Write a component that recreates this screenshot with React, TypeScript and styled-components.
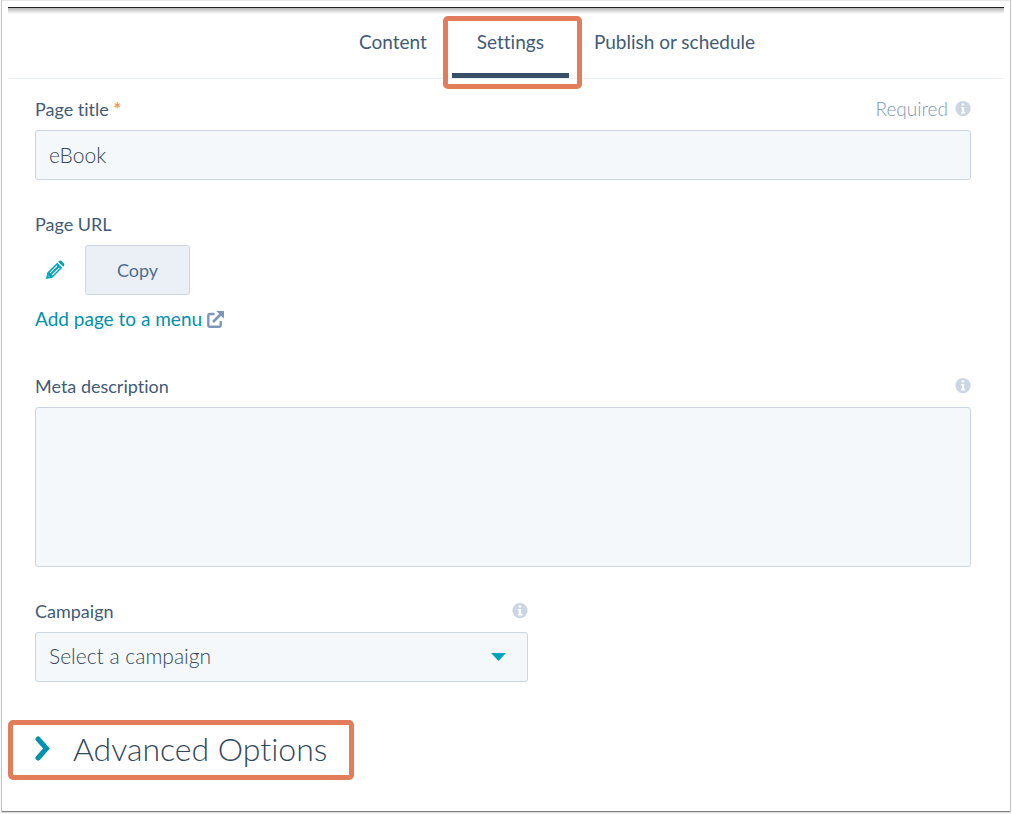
import React from "react";
import styled, { createGlobalStyle } from "styled-components";

const colors = {
  ink: "#33475b",
  tab: "#425b76",
  muted: "#7c98b6",
  line: "#cbd6e2",
  field: "#f5f8fa",
  teal: "#0091ae",
  brightTeal: "#00a4bd",
  callout: "#e27c5a",
};

const GlobalStyle = createGlobalStyle`
  *, *::before, *::after { box-sizing: border-box; }
  body {
    margin: 0;
    background: #fff;
    color: ${colors.ink};
    font-family: Lato, "Open Sans", sans-serif;
    font-size: 18px;
    font-variant-ligatures: none;
    line-height: 24px;
  }
  button, input, select, textarea {
    font: inherit;
    font-variant-ligatures: none;
    color: inherit;
  }
`;

const Frame = styled.div`
  margin: 1px 2px 3px;
  padding: 6px 6px 31px;
  background: #fff;
  box-shadow: 0 1px 0 0 #808080, 0 -1px 0 0 #e8e8e8, 0 0 0 1px #c4c4c4, 0 1px 1px 1px #dcdcdc;
`;

const Header = styled.header`
  height: 72px;
  border-top: 1px solid #222;
  border-bottom: 1px solid #eaf0f6;
  background: linear-gradient(#b4b4b4, #fff 6px);
`;

const Tabs = styled.nav`
  display: flex;
  justify-content: center;
  height: 100%;
  padding-left: 102px;
`;

const Tab = styled.a<{ $active?: boolean }>`
  position: relative;
  padding: 22px 25px 0;
  color: ${colors.tab};
  font-size: 19px;
  text-decoration: none;
  white-space: nowrap;
  border-bottom: 5px solid ${(p) => (p.$active ? "#384f67" : "transparent")};
`;

const TabCallout = styled.span`
  position: absolute;
  inset: 8px -13px -16px -9px;
  border: 5px solid ${colors.callout};
  border-radius: 5px;
  pointer-events: none;
`;

const Form = styled.form`
  padding: 19px 33px 0 27px;
`;

const Field = styled.div<{ $narrow?: boolean; $gap?: number }>`
  width: ${(p) => (p.$narrow ? "52.7%" : "100%")};
  margin-bottom: ${(p) => p.$gap ?? 33}px;
`;

const LabelRow = styled.div`
  display: flex;
  justify-content: space-between;
  align-items: center;
  height: 24px;
  margin-bottom: 8px;
  padding-bottom: 2px;
  color: ${colors.tab};
`;

const Star = styled.span`
  color: #ff8f59;
  font-weight: 700;
`;

const Hint = styled.span`
  display: flex;
  align-items: center;
  gap: 7px;
  color: ${colors.muted};
  font-size: 19px;
  font-weight: 300;
`;

const boxed = `
  display: block;
  width: 100%;
  border: 1px solid ${colors.line};
  border-radius: 3px;
  background: ${colors.field};
  outline: none;
  font-size: 21px;
  font-weight: 300;
`;

const TextInput = styled.input`
  ${boxed}
  height: 50px;
  padding: 0 13px 2px;
`;

const TextArea = styled.textarea`
  ${boxed}
  height: 160px;
  padding: 12px 13px;
  resize: none;
`;

const SelectWrap = styled.div`
  position: relative;
  svg {
    position: absolute;
    right: 22px;
    top: 21px;
    pointer-events: none;
  }
`;

const Select = styled.select`
  ${boxed}
  height: 50px;
  padding: 0 48px 2px 13px;
  appearance: none;
`;

const UrlRow = styled.div`
  display: flex;
  align-items: center;
  gap: 10px;
  margin-bottom: 13px;
`;

const IconButton = styled.button`
  display: flex;
  align-items: center;
  justify-content: center;
  width: 40px;
  height: 50px;
  padding: 0;
  border: 0;
  background: none;
`;

const CopyButton = styled.button`
  width: 105px;
  height: 50px;
  padding: 0;
  border: 1px solid ${colors.line};
  border-radius: 3px;
  background: #eaf0f6;
  color: #506e91;
`;

const MenuLink = styled.a`
  display: inline-flex;
  align-items: center;
  gap: 5px;
  height: 24px;
  padding-bottom: 2px;
  color: ${colors.teal};
  font-size: 19px;
  text-decoration: none;
  vertical-align: top;
`;

const AdvancedButton = styled.button`
  display: flex;
  align-items: center;
  gap: 23px;
  height: 60px;
  margin-top: 38px;
  padding: 0 22px 2px;
  border: 5px solid ${colors.callout};
  border-radius: 5px;
  background: #fff;
  font-size: 32px;
  font-weight: 300;
  line-height: 40px;
  white-space: nowrap;
`;

const InfoIcon = () => (
  <svg width="16" height="16" viewBox="0 0 16 16" aria-hidden="true">
    <circle cx="8" cy="7.6" r="7.6" fill="#cbd6e2" />
    <path d="M6.6 2.6h2.6v2H6.6zM6 6h3.2v4.8h1v1.6H6v-1.6h1V7.6H6z" fill="#fff" />
  </svg>
);

const PencilIcon = () => (
  <svg width="20" height="20" viewBox="0 0 20 20" aria-hidden="true">
    <path
      d="M1 19 2.3 12.6 12.2 2.7 17.3 7.8 7.4 17.7ZM13.2 1.7 14.1.9Q15.3.1 16.6 1L18.8 3.2Q19.8 4.6 18.9 5.9L18.2 6.7Z"
      fill={colors.brightTeal}
    />
    <path d="M5 12.8 12.2 5.6M7.2 15 14.4 7.8" fill="none" stroke="#fff" strokeWidth="1.1" />
    <path d="M2.7 15.2 4.8 17.3" stroke="#fff" strokeWidth=".5" />
  </svg>
);

const ExternalIcon = () => (
  <svg width="17" height="17" viewBox="0 0 17 17" fill="none" stroke={colors.muted} aria-hidden="true">
    <path d="M7.5 3H3Q1.3 3 1.3 4.7V14Q1.3 15.7 3 15.7H12Q13.7 15.7 13.7 14V10" strokeWidth="2.4" />
    <path d="M6 11 14 3" strokeWidth="2.6" />
    <path d="M9.3 0H17V7.7Z" fill={colors.muted} stroke="none" />
  </svg>
);

const CaretIcon = () => (
  <svg width="15" height="8" viewBox="0 0 15 8" aria-hidden="true">
    <path d="M0 0H15L7.5 8Z" fill={colors.brightTeal} />
  </svg>
);

const ChevronIcon = () => (
  <svg width="15" height="26" viewBox="0 0 15 26" fill="none" aria-hidden="true">
    <path
      d="M3 3 11.5 12.5 3 22"
      stroke={colors.teal}
      strokeWidth="5"
      strokeLinecap="round"
    />
  </svg>
);

export default function App() {
  return (
    <>
      <GlobalStyle />
      <Frame>
        <Header>
          <Tabs aria-label="Page editor">
            <Tab href="#content">Content</Tab>
            <Tab href="#settings" $active aria-current="page">
              Settings
              <TabCallout />
            </Tab>
            <Tab href="#publish">Publish or schedule</Tab>
          </Tabs>
        </Header>
        <main>
          <Form onSubmit={(e) => e.preventDefault()}>
            <Field>
              <LabelRow>
                <label htmlFor="title">
                  Page title <Star>*</Star>
                </label>
                <Hint>
                  Required <InfoIcon />
                </Hint>
              </LabelRow>
              <TextInput id="title" type="text" defaultValue="eBook" required />
            </Field>
            <Field $gap={43}>
              <LabelRow>Page URL</LabelRow>
              <UrlRow>
                <IconButton type="button" aria-label="Edit page URL">
                  <PencilIcon />
                </IconButton>
                <CopyButton type="button">Copy</CopyButton>
              </UrlRow>
              <MenuLink href="#menu">
                Add page to a menu <ExternalIcon />
              </MenuLink>
            </Field>
            <Field>
              <LabelRow>
                <label htmlFor="meta">Meta description</label>
                <Hint>
                  <InfoIcon />
                </Hint>
              </LabelRow>
              <TextArea id="meta" />
            </Field>
            <Field $narrow $gap={0}>
              <LabelRow>
                <label htmlFor="campaign">Campaign</label>
                <Hint>
                  <InfoIcon />
                </Hint>
              </LabelRow>
              <SelectWrap>
                <Select id="campaign">
                  <option>Select a campaign</option>
                </Select>
                <CaretIcon />
              </SelectWrap>
            </Field>
          </Form>
          <AdvancedButton type="button" aria-expanded="false">
            <ChevronIcon />
            Advanced Options
          </AdvancedButton>
        </main>
      </Frame>
    </>
  );
}
